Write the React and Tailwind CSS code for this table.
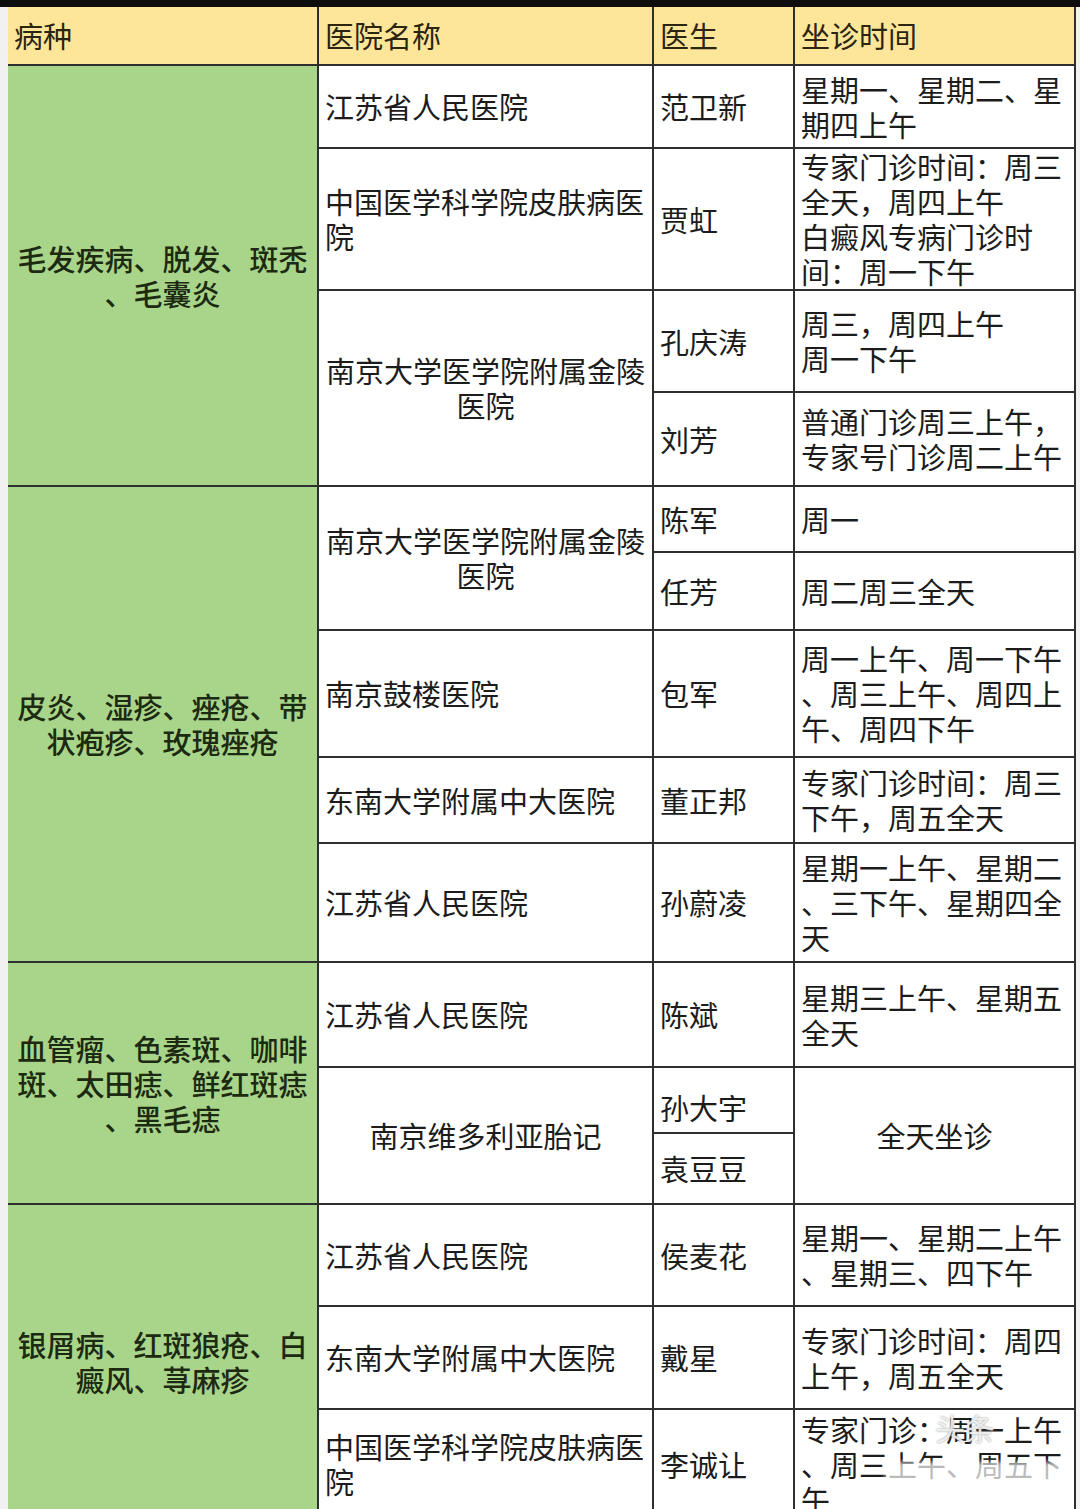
import React from 'react'

const font = { fontFamily: '"Noto Sans CJK SC", "Noto Sans", sans-serif' }

const Cell = ({ className = '', children }) => (
  <div className={`bg-white flex flex-col justify-center px-[6px] text-[29px] leading-[35px] text-[#1c1c1c] ${className}`}>
    {children}
  </div>
)

const Lines = ({ lines }) =>
  lines.map((l, i) => (
    <span key={i} className="block whitespace-nowrap">
      {l}
    </span>
  ))

const Head = ({ children, className = '' }) => (
  <div className={`bg-[#fde59a] flex items-center px-[6px] text-[29px] text-[#2a2410] ${className}`}>
    {children}
  </div>
)

const Disease = ({ className = '', lines }) => (
  <div className={`bg-[#a9d58b] flex flex-col justify-center items-center text-center text-[29px] leading-[35px] text-[#1d2a12] font-medium ${className}`}>
    <Lines lines={lines} />
  </div>
)

export default function App() {
  return (
    <div className="w-[1080px] h-[1509px] overflow-hidden bg-[#f1f1f1]" style={font}>
      <div className="h-[7px] bg-[#0d0d0d]" />
      <div className="ml-[8px] w-[1068px] pr-[2px] bg-[#2e2e2e] grid gap-[2px] grid-cols-[309px_333px_139px_279px] grid-rows-[57px_81px_140px_100px_92px_64px_76px_125px_84px_117px_103px_64px_69px_100px_101px_108px]">
        {/* header */}
        <Head className="col-start-1 row-start-1">病种</Head>
        <Head className="col-start-2 row-start-1">医院名称</Head>
        <Head className="col-start-3 row-start-1">医生</Head>
        <Head className="col-start-4 row-start-1">坐诊时间</Head>

        {/* disease groups */}
        <Disease className="col-start-1 row-start-2 row-span-4" lines={['毛发疾病、脱发、斑秃', '、毛囊炎']} />
        <Disease className="col-start-1 row-start-6 row-span-5" lines={['皮炎、湿疹、痤疮、带', '状疱疹、玫瑰痤疮']} />
        <Disease className="col-start-1 row-start-11 row-span-3" lines={['血管瘤、色素斑、咖啡', '斑、太田痣、鲜红斑痣', '、黑毛痣']} />
        <Disease className="col-start-1 row-start-14 row-span-3" lines={['银屑病、红斑狼疮、白', '癜风、荨麻疹']} />

        {/* hospitals */}
        <Cell className="col-start-2 row-start-2"><Lines lines={['江苏省人民医院']} /></Cell>
        <Cell className="col-start-2 row-start-3"><Lines lines={['中国医学科学院皮肤病医', '院']} /></Cell>
        <Cell className="col-start-2 row-start-4 row-span-2 text-center"><Lines lines={['南京大学医学院附属金陵', '医院']} /></Cell>
        <Cell className="col-start-2 row-start-6 row-span-2 text-center"><Lines lines={['南京大学医学院附属金陵', '医院']} /></Cell>
        <Cell className="col-start-2 row-start-8"><Lines lines={['南京鼓楼医院']} /></Cell>
        <Cell className="col-start-2 row-start-9"><Lines lines={['东南大学附属中大医院']} /></Cell>
        <Cell className="col-start-2 row-start-10"><Lines lines={['江苏省人民医院']} /></Cell>
        <Cell className="col-start-2 row-start-11"><Lines lines={['江苏省人民医院']} /></Cell>
        <Cell className="col-start-2 row-start-12 row-span-2 text-center"><Lines lines={['南京维多利亚胎记']} /></Cell>
        <Cell className="col-start-2 row-start-14"><Lines lines={['江苏省人民医院']} /></Cell>
        <Cell className="col-start-2 row-start-15"><Lines lines={['东南大学附属中大医院']} /></Cell>
        <Cell className="col-start-2 row-start-16"><Lines lines={['中国医学科学院皮肤病医', '院']} /></Cell>

        {/* doctors */}
        <Cell className="col-start-3 row-start-2">范卫新</Cell>
        <Cell className="col-start-3 row-start-3">贾虹</Cell>
        <Cell className="col-start-3 row-start-4">孔庆涛</Cell>
        <Cell className="col-start-3 row-start-5">刘芳</Cell>
        <Cell className="col-start-3 row-start-6">陈军</Cell>
        <Cell className="col-start-3 row-start-7">任芳</Cell>
        <Cell className="col-start-3 row-start-8">包军</Cell>
        <Cell className="col-start-3 row-start-9">董正邦</Cell>
        <Cell className="col-start-3 row-start-10">孙蔚凌</Cell>
        <Cell className="col-start-3 row-start-11">陈斌</Cell>
        <Cell className="col-start-3 row-start-12 pt-[14px]">孙大宇</Cell>
        <Cell className="col-start-3 row-start-13">袁豆豆</Cell>
        <Cell className="col-start-3 row-start-14">侯麦花</Cell>
        <Cell className="col-start-3 row-start-15">戴星</Cell>
        <Cell className="col-start-3 row-start-16">李诚让</Cell>

        {/* times */}
        <Cell className="col-start-4 row-start-2"><Lines lines={['星期一、星期二、星', '期四上午']} /></Cell>
        <Cell className="col-start-4 row-start-3"><Lines lines={['专家门诊时间：周三', '全天，周四上午', '白癜风专病门诊时', '间：周一下午']} /></Cell>
        <Cell className="col-start-4 row-start-4"><Lines lines={['周三，周四上午', '周一下午']} /></Cell>
        <Cell className="col-start-4 row-start-5"><Lines lines={['普通门诊周三上午，', '专家号门诊周二上午']} /></Cell>
        <Cell className="col-start-4 row-start-6"><Lines lines={['周一']} /></Cell>
        <Cell className="col-start-4 row-start-7"><Lines lines={['周二周三全天']} /></Cell>
        <Cell className="col-start-4 row-start-8"><Lines lines={['周一上午、周一下午', '、周三上午、周四上', '午、周四下午']} /></Cell>
        <Cell className="col-start-4 row-start-9"><Lines lines={['专家门诊时间：周三', '下午，周五全天']} /></Cell>
        <Cell className="col-start-4 row-start-10"><Lines lines={['星期一上午、星期二', '、三下午、星期四全', '天']} /></Cell>
        <Cell className="col-start-4 row-start-11"><Lines lines={['星期三上午、星期五', '全天']} /></Cell>
        <Cell className="col-start-4 row-start-12 row-span-2 text-center"><Lines lines={['全天坐诊']} /></Cell>
        <Cell className="col-start-4 row-start-14"><Lines lines={['星期一、星期二上午', '、星期三、四下午']} /></Cell>
        <Cell className="col-start-4 row-start-15"><Lines lines={['专家门诊时间：周四', '上午，周五全天']} /></Cell>
        <Cell className="col-start-4 row-start-16 relative">
          <Lines lines={['专家门诊：周一上午', '、周三上午、周五下', '午']} />
          {/* watermark */}
          <div className="absolute left-[90px] top-[52px] w-[180px] h-[24px] bg-white/70 blur-[2px]" />
          <div className="absolute left-[140px] top-[0px] text-[30px] text-white/80 [text-shadow:0_0_2px_#888]">头条</div>
        </Cell>
      </div>
    </div>
  )
}
